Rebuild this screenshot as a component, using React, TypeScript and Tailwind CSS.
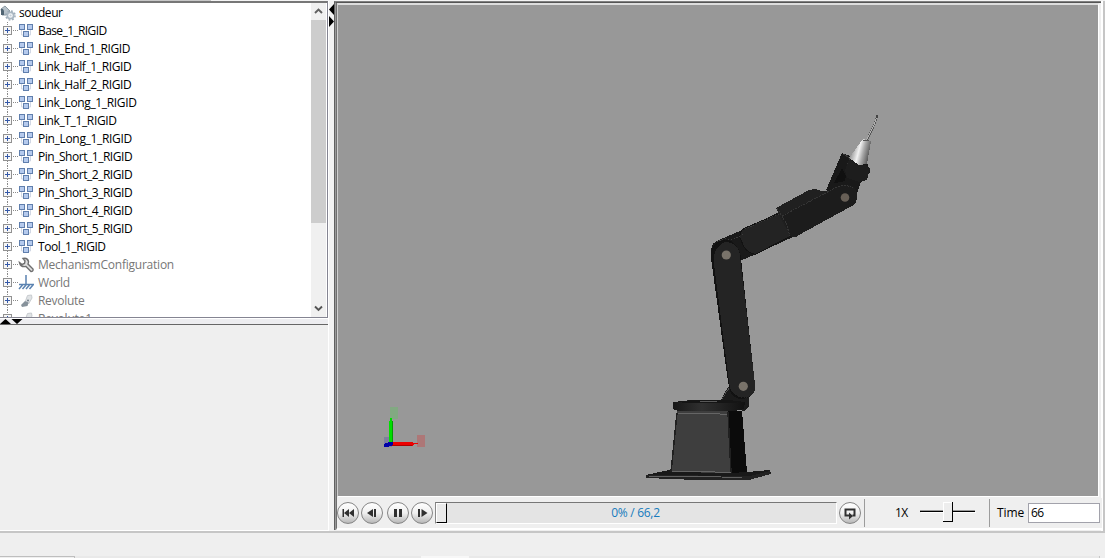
import type { ReactNode } from 'react';

type Kind = 'body' | 'wrench' | 'world' | 'joint';
type Item = { label: string; kind: Kind; spacing: string };

const items: Item[] = [
  { label: 'Base_1_RIGID', kind: 'body', spacing: 'tracking-[-0.6px]' },
  { label: 'Link_End_1_RIGID', kind: 'body', spacing: 'tracking-[-0.4px]' },
  { label: 'Link_Half_1_RIGID', kind: 'body', spacing: 'tracking-[-0.37px]' },
  { label: 'Link_Half_2_RIGID', kind: 'body', spacing: 'tracking-[-0.37px]' },
  { label: 'Link_Long_1_RIGID', kind: 'body', spacing: 'tracking-[-0.35px]' },
  { label: 'Link_T_1_RIGID', kind: 'body', spacing: 'tracking-[-0.37px]' },
  { label: 'Pin_Long_1_RIGID', kind: 'body', spacing: 'tracking-[-0.33px]' },
  { label: 'Pin_Short_1_RIGID', kind: 'body', spacing: 'tracking-[-0.47px]' },
  { label: 'Pin_Short_2_RIGID', kind: 'body', spacing: 'tracking-[-0.47px]' },
  { label: 'Pin_Short_3_RIGID', kind: 'body', spacing: 'tracking-[-0.47px]' },
  { label: 'Pin_Short_4_RIGID', kind: 'body', spacing: 'tracking-[-0.47px]' },
  { label: 'Pin_Short_5_RIGID', kind: 'body', spacing: 'tracking-[-0.47px]' },
  { label: 'Tool_1_RIGID', kind: 'body', spacing: 'tracking-[-0.45px]' },
  { label: 'MechanismConfiguration', kind: 'wrench', spacing: 'tracking-[-0.23px]' },
  { label: 'World', kind: 'world', spacing: 'tracking-[-0.4px]' },
  { label: 'Revolute', kind: 'joint', spacing: 'tracking-[-0.3px]' },
  { label: 'Revolute1', kind: 'joint', spacing: 'tracking-[-0.2px]' },
];

function NodeIcon({ kind }: { kind: Kind }) {
  return (
    <svg width="16" height="16" viewBox="0 0 16 16" className="shrink-0">
      {kind === 'body' && (
        <>
          <path d="M3.500 7v5h3M12.500 7v5h-3" fill="none" stroke="#d1d8e5" />
          <g fill="#b5caed" stroke="#607fad">
            <rect x="1.500" y="1.500" width="5" height="5" />
            <rect x="9.500" y="1.500" width="5" height="5" />
            <rect x="5.500" y="8.500" width="5" height="5" />
          </g>
        </>
      )}
      {kind === 'wrench' && (
        <path d="M5 1.500Q9.500 .5 10.500 4.500Q10.500 6 10 7L15 12Q15.500 14.500 13 14.500L8 9.500Q2.500 10.500 1.500 5.500L4 7.500L6.500 6.500L7 4Z" fill="#dedede" stroke="#6e6e6e" strokeWidth="1.400" />
      )}
      {kind === 'world' && (
        <path d="M8 0v10M1 9.500h15M4.500 10L1 14M8 10l-3.500 4M11.500 10L8 14M15 10l-3.500 4" fill="none" stroke="#5b83b1" strokeWidth="1.500" />
      )}
      {kind === 'joint' && (
        <>
          <path d="M7.500 8L9.500 2.500L13.500 2L14 5L10.500 11Z" fill="#e0e3e5" stroke="#c8ccd0" />
          <path d="M3 12l4-4l3.500 1.500l-1 3.500L4 14z" fill="#87929b" />
          <circle cx="10" cy="7.500" r="1" fill="#6f7c88" />
        </>
      )}
    </svg>
  );
}

function ModelIcon() {
  return (
    <svg width="16" height="16" viewBox="0 0 16 16" className="shrink-0">
      <path d="M1 4L5 1l5 5l-4 4H2z" fill="#b7c2ca" stroke="#8c9aa3" />
      <path d="M1 4Q3 3 4 6L4 10H1Z" fill="#516573" />
      <circle cx="10.500" cy="10.500" r="3.200" fill="#f4f6f8" stroke="#aab7c2" strokeWidth="1.800" />
      <circle cx="10.500" cy="10.500" r="4.600" fill="none" stroke="#9fadb9" strokeWidth="1.500" strokeDasharray="1.800 1.810" />
      <circle cx="10.500" cy="10.500" r="1.100" fill="#c3ced7" />
    </svg>
  );
}

function Expander() {
  return (
    <svg width="18" height="18" viewBox="0 0 18 18" className="shrink-0" shapeRendering="crispEdges">
      <path d="M7.500 0v4M7.500 13v5M13 8.500h5" stroke="#8b8b8b" strokeDasharray="1 1" />
      <rect x="3.500" y="4.500" width="8" height="8" fill="#f7f7f7" stroke="#919191" />
      <path d="M5 8.500h5M7.500 6v5" stroke="#3559a8" />
    </svg>
  );
}

function Tree() {
  return (
    <div className="h-[314px] w-[311px] overflow-hidden bg-white text-[12px] leading-[18px] text-black">
      <div className="flex h-[19px] items-center">
        <ModelIcon />
        <span className="ml-[3px] tracking-[-0.45px]">soudeur</span>
      </div>
      {items.map((it) => (
        <div key={it.label} className="flex h-[18px] items-center">
          <Expander />
          <NodeIcon kind={it.kind} />
          <span className={`ml-[4px] whitespace-nowrap ${it.spacing} ${it.kind === 'body' ? 'text-black' : 'text-[#777]'}`}>{it.label}</span>
        </div>
      ))}
    </div>
  );
}

function Scene() {
  return (
    <svg width="760" height="491" viewBox="338 5 760 491" className="block">
      <defs>
        <linearGradient id="cone" x1="0" x2="1" y1="0.300" y2="0.600">
          <stop offset="0.100" stopColor="#8a8a8a" />
          <stop offset="0.300" stopColor="#c5c5c5" />
          <stop offset="0.450" stopColor="#f1f1f1" />
          <stop offset="0.650" stopColor="#aaa" />
          <stop offset="1" stopColor="#444" />
        </linearGradient>
        <linearGradient id="disc" x1="0" x2="1">
          <stop offset="0" stopColor="#171717" />
          <stop offset="0.400" stopColor="#303030" />
          <stop offset="1" stopColor="#111" />
        </linearGradient>
      </defs>
      <g shapeRendering="crispEdges">
        <path d="M646 475L669 470L748 472L770 470L771 474L749 480L696 480L646 478Z" fill="#191919" />
        <path d="M646 475L750 476L770 471L771 474L749 480L696 480L646 478Z" fill="#222" />
        <path d="M649 476.500H700L742 477.500" stroke="#606060" fill="none" />
        <path d="M727 411L742 411L747 472L731 473Z" fill="#0b0b0b" />
        <path d="M677 411L728 411L731 473L671 472Z" fill="#3e3e3e" />
        <path d="M677 413L671 472M728 412L731 473" stroke="#202020" strokeWidth="1.500" />
        <path d="M678 413.500H713L727 414.500M672 471.500H698L731 472.500" stroke="#656565" fill="none" />
        <path d="M728 387L735 384L749 398L749 406L744 411L719 403Z" fill="#1b1b1b" />
        <path d="M720 402L729 388" stroke="#555" strokeDasharray="2 1" />
        <path d="M673 402L691 400L729 400L745 402L744 409L735 411L678 411L673 409Z" fill="url(#disc)" />
        <path d="M675 402L692 400L729 400L744 402L729 403L688 403Z" fill="#151515" />
        <path d="M700 401.500H717" stroke="#585858" />
        <path d="M711 250Q712 242 719 240L742 230L783 210L795 236L754 255L740 261L718 270Z" fill="#191919" />
        <path d="M740 238Q739 231 745 228L781 213L791 236L756 254Q750 255 744 247Z" fill="#232323" stroke="#121212" />
        <path d="M713 247Q721 236 731 240L744 234M745 229L781 213" stroke="#3c3c3c" strokeDasharray="1 2" fill="none" />
        <path d="M776 208L809 190L815 189L821 191L834 190L840 196L791 222L797 237L790 236L780 217Z" fill="#202020" />
        <path d="M826 190L842 153L850 156L867 162L870 172L860 184L857 194L842 199Z" fill="#191919" />
        <path d="M834 183L842 168L846 176L845 181L831 184Z" fill="#101010" />
        <path d="M843 154L850 158L845 172" stroke="#333" fill="none" />
        <path d="M849 160L865 165L870 168L867 180L859 182L847 178L845 170Z" fill="#1d1d1d" />
        <path d="M781 216L835 188L844 185Q856 184 857 195Q858 204 850 207L797 236L791 237Z" fill="#1c1c1c" />
        <path d="M782 216L838 186.500Q847 184 853 188M777 208L786 223L790 236" stroke="#343434" strokeDasharray="2 1" fill="none" />
        <path d="M711 258Q709 249 717 243Q722 239 729 240Q739 244 741 258L755 384Q757 393 749 397Q739 402 731 394L728 382Z" fill="#121212" />
        <path d="M714 264Q712 248 725 242Q739 243 740 256L755 384Q757 394 746 398Q735 399 730 388L728 374Z" fill="#242424" />
        <path d="M712 250Q719 237 731 242M730 389Q735 398 746 398" stroke="#101010" strokeDasharray="2 1" fill="none" />
        <path d="M863 139L871 141L867 164L859 165L849 158Z" fill="url(#cone)" />
        <path d="M867 140L875 123L877 116" stroke="#565656" strokeWidth="2" fill="none" />
        <path d="M866.500 140L874.500 124L876.500 117" stroke="#b0b0b0" fill="none" />
        <path d="M863 140h6" stroke="#555" />
        <path d="M877 115v3" stroke="#444" strokeWidth="2" />
      </g>
      <circle cx="726.300" cy="255" r="4.600" fill="#79736a" />
      <circle cx="743.300" cy="386.300" r="4.600" fill="#79736a" />
      <circle cx="845" cy="197.500" r="4.300" fill="#675f56" />
      <g shapeRendering="crispEdges">
        <rect x="390" y="407" width="8" height="12" fill="#82a982" />
        <rect x="417" y="435" width="8" height="12" fill="#ad7777" />
        <rect x="384" y="437" width="8" height="10" fill="#7f7f9e" />
        <path d="M391 418v3" stroke="#00d900" strokeWidth="2" />
        <path d="M389 421h3v22h-3z" fill="#00df00" />
        <path d="M392 421h1v22h-1z" fill="#00a000" />
        <path d="M392 442h20l2 1h4v1h-4l-2 2h-20z" fill="#ed0000" />
        <path d="M392 445.500h20" stroke="#ad0000" />
        <path d="M384 444l5-2h4v3l-5 2h-4z" fill="#0000a8" />
      </g>
    </svg>
  );
}

function RoundButton({ children }: { children: ReactNode }) {
  return (
    <button className="flex h-[22px] w-[22px] shrink-0 items-center justify-center rounded-full border-[1.5px] border-[#858585] bg-linear-to-b from-[#fff] via-[#f0f0f0] to-[#b8b8b8]">
      <svg width="20" height="20" viewBox="0 0 20 20" fill="#303030" className="shrink-0">
        {children}
      </svg>
    </button>
  );
}

function Toolbar() {
  return (
    <div className="flex h-[30px] w-[765px] items-center bg-[#efefef] text-[12px] text-black">
      <RoundButton>
        <path d="M4.500 6H6v8H4.500zM6 10l5-4v8zM11 10l5-4v8z" />
      </RoundButton>
      <div className="ml-[2px] flex">
        <RoundButton>
          <path d="M5 10l6-4v8zM12 6h2v8h-2z" />
        </RoundButton>
      </div>
      <div className="ml-[4px] flex">
        <RoundButton>
          <path d="M6 6h3v8H6zM11 6h3v8h-3z" />
        </RoundButton>
      </div>
      <div className="ml-[2px] flex">
        <RoundButton>
          <path d="M6 6h2v8H6zM9.500 6l6 4l-6 4z" />
        </RoundButton>
      </div>
      <div className="ml-[2px] flex h-[22px] w-[402px] border-t border-r border-b border-l border-t-[#777] border-r-white border-b-white border-l-[#888] bg-[#e4e4e4]">
        <div className="h-[20px] w-[11px] shrink-0 border border-white border-r-black border-b-black bg-[#eaeaea]" />
        <div className="flex-1 pr-[12px] text-center leading-[20px] tracking-[-0.3px] text-[#167bbd]">0% / 66,2</div>
      </div>
      <div className="ml-[2px] flex">
        <RoundButton>
          <path d="M9 12.500H5.500V6.500H14.500V12.500h-2" fill="none" stroke="#303030" strokeWidth="2" />
          <path d="M9 9.500l4 3.500l-4 3.500z" />
        </RoundButton>
      </div>
      <div className="ml-[3px] h-[28px] w-px bg-[#9c9c9c]" />
      <span className="ml-[30px] w-[26px] tracking-[-0.5px]">1X</span>
      <svg width="56" height="22" viewBox="0 0 56 22" className="-mt-[2px] -ml-px shrink-0" shapeRendering="crispEdges">
        <path d="M0 9.500h55" stroke="#999" />
        <path d="M0 10.500h55" stroke="#000" />
        <path d="M1 11.500h55" stroke="#fff" />
        <rect x="23" y="1" width="10" height="20" fill="#000" />
        <rect x="23" y="1" width="9" height="19" fill="#fff" />
        <rect x="24" y="2" width="8" height="18" fill="#ededed" />
      </svg>
      <div className="ml-[13px] h-[28px] w-px bg-[#9c9c9c]" />
      <span className="ml-[7px] w-[31px] tracking-[-0.1px]">Time</span>
      <div className="h-[20px] w-[72px] border border-[#a2a2ab] bg-white pl-[2px] leading-[18px] tracking-[-0.5px]">66</div>
    </div>
  );
}

export default function App() {
  return (
    <div className="h-[558px] w-[1105px] overflow-hidden bg-[#efefef] font-['Open_Sans',sans-serif]">
      <div className="h-px bg-[#f4f4f4]">
        <div className="h-px w-[211px] bg-[#c7c7c7]" />
      </div>
      <div className="flex h-[530px]">
        <div className="w-[328px] shrink-0">
          <div className="flex h-[317px] border-t-2 border-r border-b border-t-[#777] border-r-[#858592] border-b-[#858592] bg-white">
            <Tree />
            <div className="flex w-[16px] flex-col border-r border-white bg-[#f0f0f0]">
              <div className="flex h-[17px] items-center justify-center">
                <svg width="9" height="7" viewBox="0 0 9 7">
                  <path d="M1 5l3.500-3.500L8 5" fill="none" stroke="#606060" strokeWidth="1.900" />
                </svg>
              </div>
              <div className="h-[203px] bg-[#cdcdcd]" />
              <div className="mt-auto flex h-[17px] items-center justify-center">
                <svg width="9" height="7" viewBox="0 0 9 7">
                  <path d="M1 1.500L4.500 5L8 1.500" fill="none" stroke="#555" strokeWidth="1.900" />
                </svg>
              </div>
            </div>
          </div>
          <div className="h-[7px] border-t border-b border-t-[#fff] border-b-[#666] bg-[#ededf0]">
            <svg width="24" height="5" viewBox="0 0 24 5" className="block">
              <path d="M0 5l5.500-5L11 5zM11.500 0h11L17 5z" fill="#000" />
            </svg>
          </div>
          <div className="h-[206px] border-b border-white" />
        </div>
        <div className="w-[6px] shrink-0 border-l border-white bg-[#f2f2f2]">
          <svg width="5" height="28" viewBox="0 0 5 28" className="block">
            <path d="M5 3v11L0 8.500zM0 15v11l5-5.500z" fill="#000" />
          </svg>
        </div>
        <div className="w-[769px] shrink-0 border-r-2 border-white">
          <div className="h-[529px] border-t border-l border-t-[#808080] border-l-[#606060]">
            <div className="h-[528px] border-t border-l border-t-[#555] border-l-[#999]">
              <div className="h-[527px] border-b-2 border-l border-white border-l-[#707070]">
                <div className="h-[494px] w-[762px] border-t-2 border-r border-b border-l border-[#fff] border-t-[#ddd] border-l-[#d0d0d0] bg-[#989898]">
                  <Scene />
                </div>
                <div className="h-px" />
                <Toolbar />
              </div>
            </div>
          </div>
        </div>
        <div className="w-[2px] bg-[#c6c6c6]" />
      </div>
      <div className="h-[2px] bg-[#c6c6c6]" />
      <div className="flex h-[25px] items-end">
        <div className="h-[2px] w-[75px] border-t border-r border-[#bebebe]" />
        <div className="h-[2px] w-[346px] bg-[#e9e9e9]" />
        <div className="h-[2px] w-[48px] bg-[#f7f7f7]" />
        <div className="h-[2px] w-[631px] border-r border-[#c8c8c8] bg-[#e9e9e9]" />
      </div>
    </div>
  );
}
